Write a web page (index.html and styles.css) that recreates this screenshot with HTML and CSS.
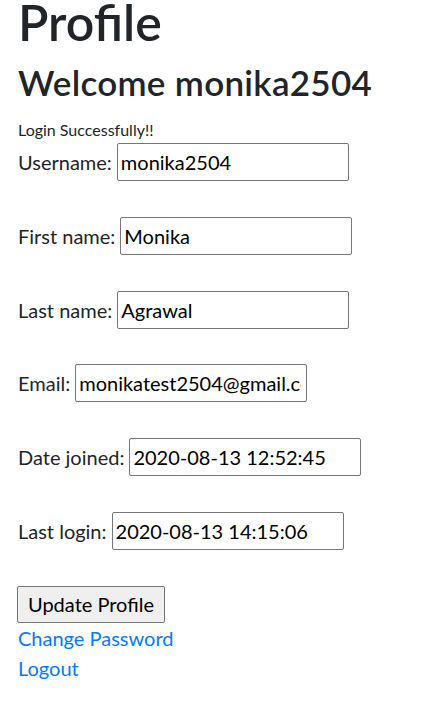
FILE: index.html
```html
<!DOCTYPE html>
<html lang="en">
<head>
<meta charset="utf-8">
<title>Profile</title>
<link rel="stylesheet" href="styles.css">
</head>
<body>
<div class="page">
  <h1 class="title">Profile</h1>
  <h3 class="welcome">Welcome monika2504</h3>
  <div class="msg">Login Successfully!!</div>
  <form class="form">
    <div class="field"><label for="u">Username:</label><input class="inp" id="u" type="text" value="monika2504"></div>
    <div class="field"><label for="f">First name:</label><input class="inp" id="f" type="text" value="Monika"></div>
    <div class="field"><label for="l">Last name:</label><input class="inp" id="l" type="text" value="Agrawal"></div>
    <div class="field"><label for="e">Email:</label><input class="inp" id="e" type="text" value="monikatest2504@gmail.com"></div>
    <div class="field"><label for="d">Date joined:</label><input class="inp" id="d" type="text" value="2020-08-13 12:52:45"></div>
    <div class="field"><label for="ll">Last login:</label><input class="inp" id="ll" type="text" value="2020-08-13 14:15:06"></div>
    <div class="actions"><button class="btn" type="button">Update Profile</button></div>
  </form>
  <div class="links">
    <a class="link" href="#">Change Password</a>
    <a class="link" href="#">Logout</a>
  </div>
</div>
</body>
</html>
```
FILE: styles.css
```css
html, body {
  margin: 0;
  padding: 0;
  background: #fff;
}
body {
  font-family: Lato, "Open Sans", sans-serif;
  font-size: 20px;
  line-height: 1.5;
  color: #212529;
}
.page {
  padding: 0 18px;
}
.title {
  font-size: 50px;
  font-weight: 600;
  line-height: 45px;
  margin: 0 0 16px;
}
.welcome {
  font-size: 35px;
  font-weight: 600;
  line-height: 1.2;
  margin: 0 0 15px;
  letter-spacing: 0.3px;
}
.msg {
  font-size: 16px;
  line-height: 24px;
  height: 24px;
}
.form {
  margin: 1px 0 0;
  display: flex;
  flex-direction: column;
  align-items: flex-start;
  gap: 35.8px;
}
.field {
  display: flex;
  align-items: center;
  gap: 5px;
  height: 38px;
}
.inp {
  box-sizing: border-box;
  width: 232px;
  height: 38px;
  margin: 0;
  padding: 0 5px 0 3px;
  border: 1px solid #767676;
  border-radius: 2px;
  font-family: inherit;
  font-size: 20px;
  color: #000;
  background: #fff;
}
.btn {
  box-sizing: border-box;
  height: 37px;
  margin: 0 0 0 -1px;
  padding: 0 10px;
  border: 1px solid #767676;
  border-radius: 2px;
  background: #efefef;
  color: #000;
  font-family: inherit;
  font-size: 20px;
  line-height: 1;
}
.links {
  display: flex;
  flex-direction: column;
  align-items: flex-start;
}
.link {
  color: #007bff;
  text-decoration: none;
  line-height: 30px;
}
```
